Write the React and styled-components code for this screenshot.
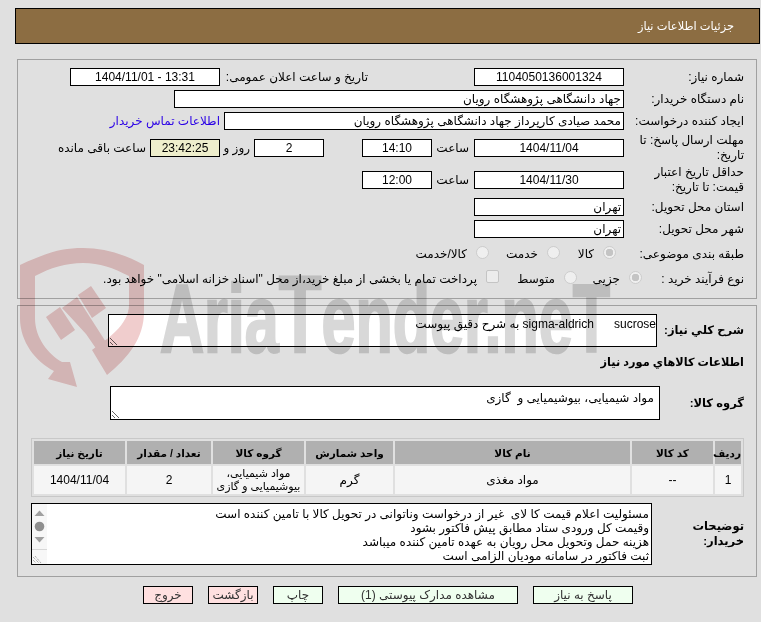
import React from "react";
import styled, { createGlobalStyle } from "styled-components";

const Global = createGlobalStyle`
  html, body { margin: 0; padding: 0; background: #e0e0e0; }
  body { font-family: "Liberation Sans", "DejaVu Sans", sans-serif; font-size: 12px; color: #000; }
`;

const Page = styled.div`
  position: relative;
  width: 761px;
  height: 622px;
  overflow: hidden;
  direction: rtl;
  padding-top: 8px;
  box-sizing: border-box;
`;
const Header = styled.div`
  height: 34px;
  margin: 0 1px 0 15px;
  background: #8c6d42;
  border: 1px solid #000;
  color: #fff;
  font-size: 11.4px;
  display: flex;
  align-items: center;
  padding-right: 25px;
`;
const Panel = styled.div`
  margin: ${(p) => p.$top}px 4px 0 17px;
  border: 1px solid #a0a0a0;
  padding: ${(p) => p.$pt}px 12px ${(p) => p.$pb}px 0;
`;
const Row = styled.div`
  display: flex;
  align-items: center;
  height: ${(p) => p.$h}px;
`;
const Label = styled.div`
  flex: none;
  box-sizing: border-box;
  width: ${(p) => p.$w || 120}px;
  font-weight: ${(p) => (p.$bold ? 700 : 400)};
  font-size: ${(p) => (p.$bold ? "11.5px" : "12px")};
  line-height: 15px;
`;
const Field = styled.div`
  flex: none;
  box-sizing: border-box;
  width: ${(p) => p.$w}px;
  height: 18px;
  line-height: 16px;
  border: 1px solid #000;
  background: ${(p) => (p.$timer ? "#eeeecc" : "#fff")};
  text-align: ${(p) => (p.$start ? "right" : "center")};
  padding: 0 2px;
  margin-right: ${(p) => p.$gap || 0}px;
  white-space: nowrap;
`;
const Inline = styled.div`
  flex: none;
  width: ${(p) => p.$w}px;
  margin-right: ${(p) => p.$gap}px;
  white-space: nowrap;
`;
const ContactLink = styled.a`
  margin-right: 4px;
  color: #2a00e6;
  white-space: nowrap;
`;
const Option = styled.div`
  flex: none;
  width: ${(p) => p.$w}px;
  padding-right: 8px;
  box-sizing: border-box;
  display: flex;
  align-items: center;
  gap: 9px;
  white-space: nowrap;
`;
const Radio = styled.span`
  flex: none;
  box-sizing: border-box;
  width: 13px;
  height: 13px;
  margin-top: -3px;
  border-radius: 50%;
  background: radial-gradient(circle, ${(p) => (p.$on ? "#c4c4c4 0 3.5px, #efefef 4px" : "#efefef 0")});
  border: 1px solid #cdcdcd;
`;
const Check = styled.span`
  flex: none;
  box-sizing: border-box;
  width: 13px;
  height: 13px;
  margin-top: -6px;
  background: #ececec;
  border: 1px solid #c4c4c4;
  border-radius: 2px;
`;
const Area = styled.textarea`
  flex: none;
  box-sizing: border-box;
  display: block;
  width: ${(p) => p.$w}px;
  height: ${(p) => p.$h}px;
  border: 1px solid #000;
  border-radius: 0;
  background: #fff;
  margin: 0;
  padding: ${(p) => p.$pad};
  font: inherit;
  outline: none;
  direction: rtl;
`;
const SectionTitle = styled.div`
  margin: 7px 0 16px;
  height: 16px;
  line-height: 16px;
  font-size: 11.3px;
  font-weight: 700;
`;
const Table = styled.table`
  box-sizing: border-box;
  width: 713px;
  height: 59px;
  margin: 18px 0 6px;
  border: 1px solid #c8c8c8;
  border-collapse: separate;
  border-spacing: 2px;
  table-layout: fixed;
  text-align: center;
`;
const Th = styled.th`
  width: ${(p) => p.$w}px;
  height: 23px;
  padding: 0;
  background: #b0b0b0;
  font-size: 10.5px;
  font-weight: 700;
  white-space: nowrap;
`;
const Td = styled.td`
  height: 28px;
  padding: 0;
  background: #f5f5f5;
  line-height: 13px;
  font-size: ${(p) => (p.$small ? "11px" : "12px")};
`;
const DescBox = styled.div`
  flex: none;
  box-sizing: border-box;
  display: flex;
  width: 621px;
  height: 62px;
  border: 1px solid #000;
  background: #fff;
`;
const DescText = styled.div`
  flex: 1;
  padding: 3px 2px 0 0;
  line-height: 14px;
  white-space: pre;
`;
const Rail = styled.div`
  flex: none;
  width: 15px;
  background: #f7f7f7;
`;
const Buttons = styled.div`
  display: flex;
  gap: 15px;
  margin: 9px 128px 0 0;
`;
const Button = styled.button`
  box-sizing: border-box;
  width: ${(p) => p.$w}px;
  height: 18px;
  padding: 0;
  border: 1px solid #000;
  background: ${(p) => (p.$danger ? "#ffe0e0" : "#efffef")};
  color: #333;
  font: inherit;
  line-height: 14px;
`;
const WatermarkSvg = styled.svg`
  position: absolute;
  left: 0;
  top: 0;
  pointer-events: none;
  mix-blend-mode: multiply;
`;
const WmText = styled.text`
  font-family: "Liberation Sans", sans-serif;
  font-weight: 700;
  direction: ltr;
`;

const Watermark = () => (
  <WatermarkSvg width="761" height="622" viewBox="0 0 761 622">
    <g fill="#f0cdcd">
      <path d="M20 265 C48 252 62 248 83 248 C104 248 124 254 144 265 L144 312 C144 338 128 358 107 375 L92 350 C106 340 129 325 129 305 L129 276 C113 268 100 263 83 263 C66 263 50 268 35 276 L35 318 C35 338 48 354 62 362 L70 362 L77 387 L48 379 L54 371 C36 362 20 342 20 318 Z" />
      <path d="M46 317 L60 307 L75 330 L61 340 Z" />
      <path d="M78 295 L91 286 L106 308 L92 318 Z" />
      <path d="M62 308 L77 297 L113 353 L104 360 L86 334 L75 322 Z" />
    </g>
    <WmText
      x="160"
      y="352"
      fontSize="96"
      fill="#d8d8d8"
      stroke="#d8d8d8"
      strokeWidth="2.5"
      textLength="450"
      lengthAdjust="spacingAndGlyphs"
    >
      Aria<tspan fontSize="110">T</tspan>ender.neT
    </WmText>
  </WatermarkSvg>
);

const ScrollRail = () => (
  <Rail>
    <svg width="15" height="60" viewBox="0 0 15 60">
      <path d="M2.5 12 L7.5 6.5 L12.5 12 Z" fill="#a0a0a0" />
      <circle cx="7.5" cy="22.5" r="4.8" fill="#8f8f8f" />
      <path d="M2.5 33 L12.5 33 L7.5 38.5 Z" fill="#a0a0a0" />
      <path d="M0 45.5 H15" stroke="#d8d8d8" />
      <path d="M1 53 L7 59 M1 56 L4 59 M3 52 L9 59" stroke="#777" strokeWidth="0.8" strokeDasharray="1 1" />
    </svg>
  </Rail>
);

const desc = [
  "مسئولیت اعلام قیمت کا لای  غیر از درخواست وناتوانی در تحویل کالا با تامین کننده است",
  "وقیمت کل ورودی ستاد مطابق پیش فاکتور بشود",
  "هزینه حمل وتحویل محل رویان به عهده تامین کننده میباشد",
  "ثبت فاکتور در سامانه مودیان الزامی است",
].join("\n");

export default function App() {
  return (
    <Page>
      <Global />
      <Header>جزئیات اطلاعات نیاز</Header>
      <Panel $top={15} $pt={6} $pb={8}>
        <Row $h={22}>
          <Label>شماره نیاز:</Label>
          <Field $w={150}>1104050136001324</Field>
          <Inline $w={144} $gap={106}>تاریخ و ساعت اعلان عمومی:</Inline>
          <Field $w={150} $gap={4}>13:31 - 1404/11/01</Field>
        </Row>
        <Row $h={22}>
          <Label>نام دستگاه خریدار:</Label>
          <Field $w={450} $start>جهاد دانشگاهی پژوهشگاه رویان</Field>
        </Row>
        <Row $h={22}>
          <Label>ایجاد کننده درخواست:</Label>
          <Field $w={400} $start>محمد صیادی کارپرداز جهاد دانشگاهی پژوهشگاه رویان</Field>
          <ContactLink>اطلاعات تماس خریدار</ContactLink>
        </Row>
        <Row $h={32}>
          <Label>مهلت ارسال پاسخ: تا تاریخ:</Label>
          <Field $w={150}>1404/11/04</Field>
          <Inline $w={33} $gap={5}>ساعت</Inline>
          <Field $w={70} $gap={4}>14:10</Field>
          <Field $w={70} $gap={38}>2</Field>
          <Inline $w={22} $gap={4}>روز و</Inline>
          <Field $w={70} $gap={8} $timer>23:42:25</Field>
          <Inline $w={90} $gap={4}>ساعت باقی مانده</Inline>
        </Row>
        <Row $h={32}>
          <Label>حداقل تاریخ اعتبار قیمت: تا تاریخ:</Label>
          <Field $w={150}>1404/11/30</Field>
          <Inline $w={33} $gap={5}>ساعت</Inline>
          <Field $w={70} $gap={4}>12:00</Field>
        </Row>
        <Row $h={22}>
          <Label>استان محل تحویل:</Label>
          <Field $w={150} $start>تهران</Field>
        </Row>
        <Row $h={22}>
          <Label>شهر محل تحویل:</Label>
          <Field $w={150} $start>تهران</Field>
        </Row>
        <Row $h={28}>
          <Label>طبقه بندی موضوعی:</Label>
          <Option $w={56}><Radio $on />کالا</Option>
          <Option $w={71}><Radio />خدمت</Option>
          <Option $w={90}><Radio />کالا/خدمت</Option>
        </Row>
        <Row $h={22}>
          <Label $w={94}>نوع فرآیند خرید :</Label>
          <Option $w={65}><Radio $on />جزیی</Option>
          <Option $w={78}><Radio />متوسط</Option>
          <Option $w={400}><Check />پرداخت تمام یا بخشی از مبلغ خرید،از محل "اسناد خزانه اسلامی" خواهد بود.</Option>
        </Row>
      </Panel>
      <Panel $top={6} $pt={8} $pb={11}>
        <Row $h={33}>
          <Label $w={87} $bold>شرح کلي نياز:</Label>
          <Area $w={549} $h={33} $pad="2px 0" readOnly value={"sucrose      \u200fsigma-aldrich به شرح دقیق پیوست"} />
        </Row>
        <SectionTitle>اطلاعات کالاهاي مورد نياز</SectionTitle>
        <Row $h={34}>
          <Label $w={84} $bold>گروه کالا:</Label>
          <Area $w={550} $h={34} $pad="4px 5px" readOnly value="مواد شیمیایی، بیوشیمیایی و  گازی" />
        </Row>
        <Table>
          <thead>
            <tr>
              <Th $w={26}>ردیف</Th>
              <Th $w={81}>کد کالا</Th>
              <Th $w={235}>نام کالا</Th>
              <Th $w={87}>واحد شمارش</Th>
              <Th $w={91}>گروه کالا</Th>
              <Th $w={84}>تعداد / مقدار</Th>
              <Th $w={91}>تاریخ نیاز</Th>
            </tr>
          </thead>
          <tbody>
            <tr>
              <Td>1</Td>
              <Td>--</Td>
              <Td>مواد مغذی</Td>
              <Td>گرم</Td>
              <Td $small>مواد شیمیایی، بیوشیمیایی و گازی</Td>
              <Td>2</Td>
              <Td>1404/11/04</Td>
            </tr>
          </tbody>
        </Table>
        <Row $h={62}>
          <Label $w={92} $bold>توضیحات خریدار:</Label>
          <DescBox>
            <DescText>{desc}</DescText>
            <ScrollRail />
          </DescBox>
        </Row>
      </Panel>
      <Buttons>
        <Button $w={100}>پاسخ به نیاز</Button>
        <Button $w={180}>مشاهده مدارک پیوستی (1)</Button>
        <Button $w={50}>چاپ</Button>
        <Button $w={50} $danger>بازگشت</Button>
        <Button $w={50} $danger>خروج</Button>
      </Buttons>
      <Watermark />
    </Page>
  );
}
